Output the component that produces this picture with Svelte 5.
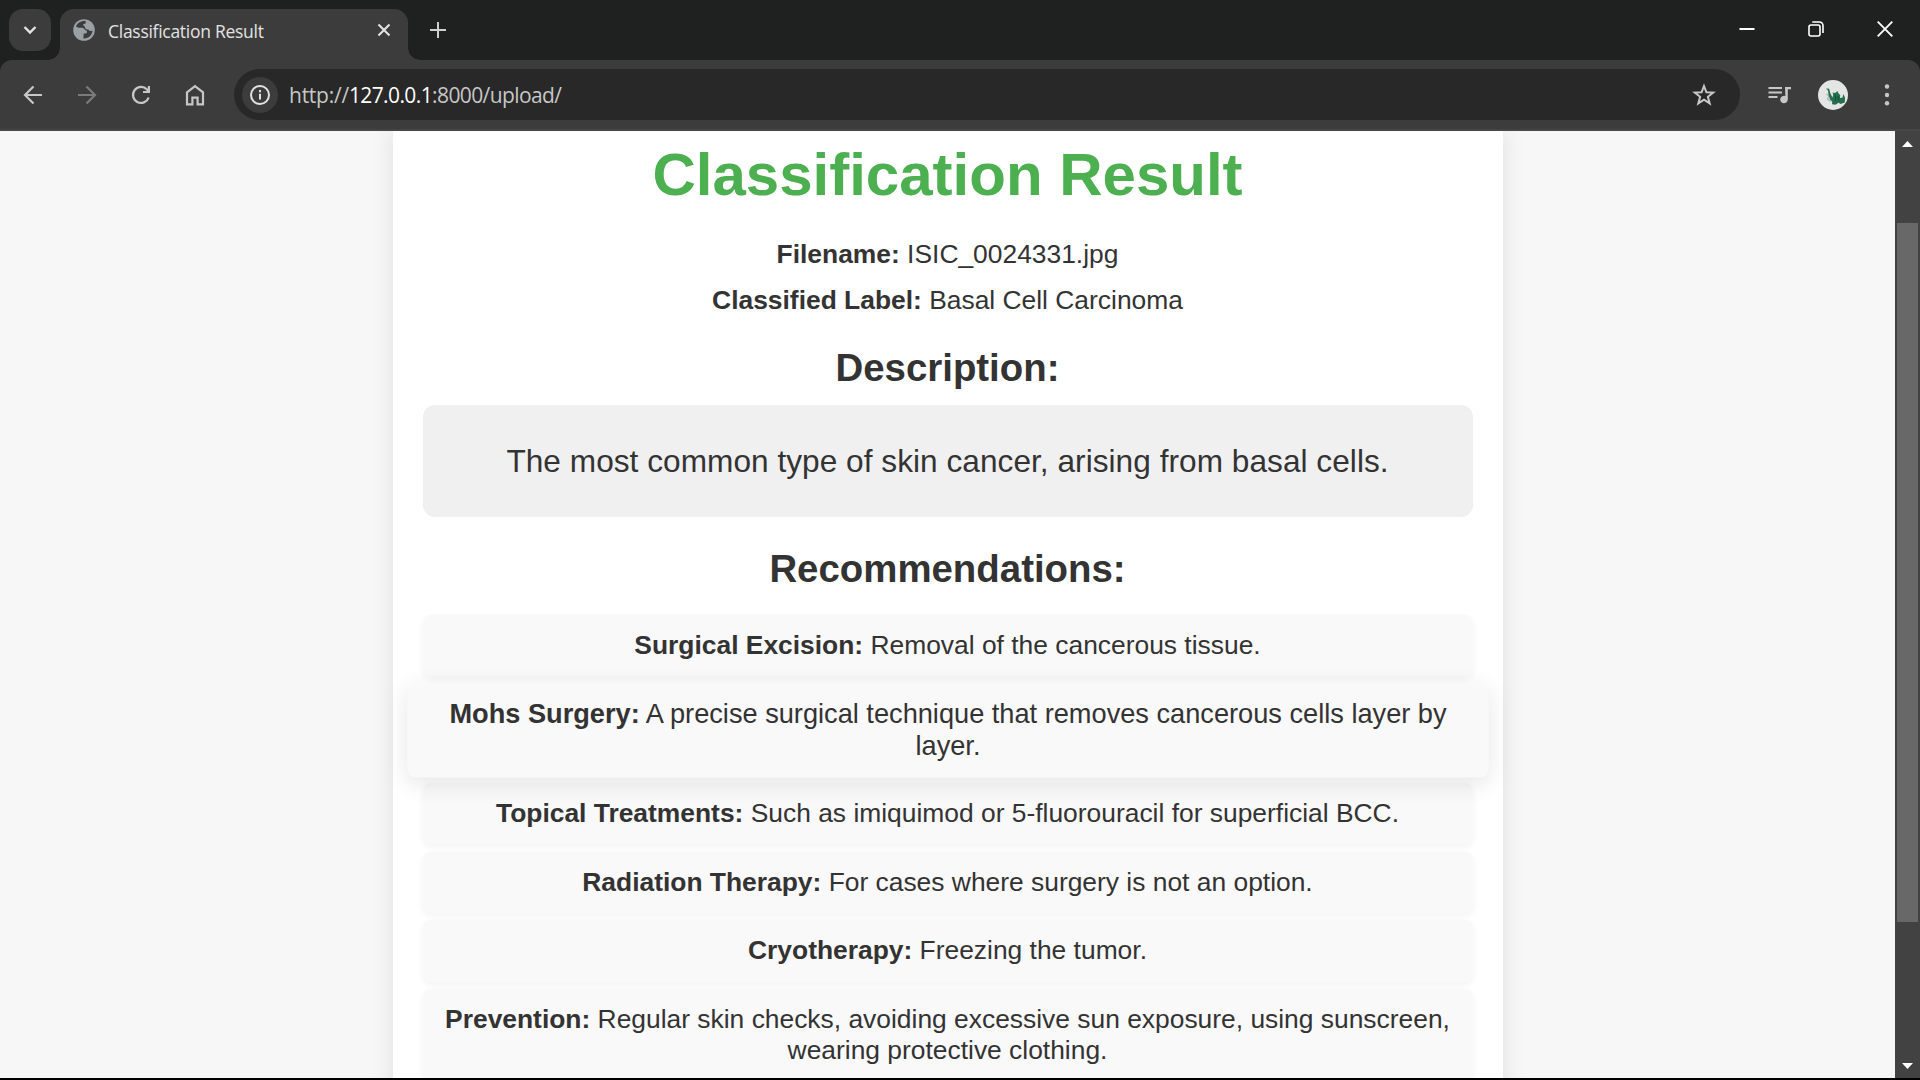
<script>
  const recommendations = [
    { name: 'Surgical Excision:', text: 'Removal of the cancerous tissue.' },
    { name: 'Mohs Surgery:', text: 'A precise surgical technique that removes cancerous cells layer by layer.', raised: true },
    { name: 'Topical Treatments:', text: 'Such as imiquimod or 5-fluorouracil for superficial BCC.' },
    { name: 'Radiation Therapy:', text: 'For cases where surgery is not an option.' },
    { name: 'Cryotherapy:', text: 'Freezing the tumor.' },
    { name: 'Prevention:', text: 'Regular skin checks, avoiding excessive sun exposure, using sunscreen, wearing protective clothing.' }
  ];
</script>

<div class="window">
  <header class="tabstrip">
    <button class="tab-search" aria-label="Search tabs">
      <svg width="16" height="16" viewBox="0 0 16 16"><path d="M2.5 5 L8 10.5 L13.5 5" fill="none" stroke="#e3e3e3" stroke-width="2.4" /></svg>
    </button>
    <div class="tab">
      <svg class="globe" width="22" height="22" viewBox="0 0 22 22">
        <circle cx="11" cy="11" r="10.8" fill="#9aa0a6" />
        <path d="M12.8 2.2 C8 1.6 4.5 4 3 7.6 C4.5 8.8 6 9 9 8.8 C10.5 9 11.5 10 12.2 11 C14 11.5 14.5 13 13.6 14.2 L10.6 14.6 L10.4 19.6 C13.5 19.8 16.6 18.2 18.4 15.2 C19 14 19.5 12.8 19.6 11.4 C18 12.6 16.2 12.2 15.4 10.6 C13.2 10.6 11.6 9.4 11.8 7.4 C9.6 7 9.6 4.8 12.6 4.6 Z" fill="#3c3c3c" />
        <path d="M3 8.2 C7 9.4 11 9.4 12.6 12.4 C12.6 14 10.8 14.2 10.2 14.8 L9.8 19.6 L5 18 Z" fill="#9aa0a6" />
      </svg>
      <span class="tab-title">Classification Result</span>
      <svg class="tab-close" width="14" height="14" viewBox="0 0 14 14"><path d="M1.5 1.5 L12.5 12.5 M12.5 1.5 L1.5 12.5" stroke="#e3e3e3" stroke-width="2.1" /></svg>
    </div>
    <svg class="newtab" width="16" height="16" viewBox="0 0 16 16"><path d="M8 0 V16 M0 8 H16" stroke="#cfcfcf" stroke-width="2" /></svg>
    <div class="controls">
      <svg width="16" height="16" viewBox="0 0 16 16"><path d="M0.5 8 H15.5" stroke="#fff" stroke-width="2" /></svg>
      <svg width="16" height="16" viewBox="0 0 16 16" fill="none" stroke="#fff" stroke-width="1.6"><rect x="1" y="4" width="11" height="11" rx="2" /><path d="M4.3 1 H11.5 A3.5 3.5 0 0 1 15 4.5 V12" /></svg>
      <svg width="16" height="16" viewBox="0 0 16 16"><path d="M0.7 0.7 L15.3 15.3 M15.3 0.7 L0.7 15.3" stroke="#fff" stroke-width="1.8" /></svg>
    </div>
  </header>

  <nav class="toolbar">
    <svg class="nav-icon" width="24" height="24" viewBox="0 0 24 24"><path d="M21 12 H4.5 M12.5 3.5 L4 12 L12.5 20.5" fill="none" stroke="#c7c7c7" stroke-width="2.2" /></svg>
    <svg class="nav-icon" width="24" height="24" viewBox="0 0 24 24"><path d="M3 12 H19.5 M11.5 3.5 L20 12 L11.5 20.5" fill="none" stroke="#7b7b7b" stroke-width="2.2" /></svg>
    <svg class="nav-icon" width="24" height="24" viewBox="0 0 24 24"><path d="M19.6 14.5 A8 8 0 1 1 18 6.6 L20 8.8" fill="none" stroke="#c7c7c7" stroke-width="2.2" /><path d="M21 3 V10 H14 V7.9 H18.8 V3 Z" fill="#c7c7c7" /></svg>
    <svg class="nav-icon" width="24" height="24" viewBox="0 0 24 24"><path d="M4 9.3 L12 3.2 L20 9.3 V21.4 H14.6 V14.6 H9.4 V21.4 H4 Z" fill="none" stroke="#c7c7c7" stroke-width="2.2" /></svg>
    <div class="omnibox">
      <span class="site-info">
        <svg width="22" height="22" viewBox="0 0 22 22"><circle cx="11" cy="11" r="9" fill="none" stroke="#e3e3e3" stroke-width="2" /><path d="M11 9.8 V15.6 M11 6 V8.2" stroke="#e3e3e3" stroke-width="2" /></svg>
      </span>
      <span class="url"><span class="scheme">http://</span><b>127.0.0.1</b>:8000/upload/</span>
      <svg class="star" width="24" height="24" viewBox="0 0 24 24"><path d="M12 3 L14.4 9.3 L21.2 9.6 L15.9 13.8 L17.7 20.4 L12 16.6 L6.3 20.4 L8.1 13.8 L2.8 9.6 L9.6 9.3 Z" fill="none" stroke="#c7c7c7" stroke-width="2" /></svg>
    </div>
    <svg class="media" width="24" height="18" viewBox="0 0 24 18"><path d="M0.5 2 H14 M0.5 6.5 H14 M0.5 11 H9.5" stroke="#c7c7c7" stroke-width="2" /><path d="M17 1 H23 V3.2 H19.8 V13.5 A3.8 3.8 0 1 1 17.4 10 Z" fill="#c7c7c7" /></svg>
    <svg class="avatar" width="30" height="30" viewBox="0 0 30 30">
      <circle cx="15" cy="15" r="15" fill="#e4e6e5" />
      <path d="M8.5 14 L11 16 L9.5 19 L13 21.5" fill="none" stroke="#aab5ae" stroke-width="1.3" />
      <path d="M8 8.5 L11.2 8.8 L12.2 13 L14.4 17.5 L15.2 15 L14.6 12.5 L17.2 13 L19.4 11 L20.6 13.5 L22.2 15 L22 18 L24.6 17.5 L25.2 14 L27 17.5 L26.8 22.5 L22.5 24 L20.5 22.8 L17.5 24.8 L14 24.2 L14.2 21.5 L12 19.5 L10.4 14 L10 10.6 Z" fill="#23704f" />
      <path d="M17 15 L18 21 M20 16 L21 21" stroke="#174a37" stroke-width="1" />
    </svg>
    <svg class="menu" width="6" height="24" viewBox="0 0 6 24" fill="#c7c7c7"><circle cx="3" cy="3.5" r="2.2" /><circle cx="3" cy="12" r="2.2" /><circle cx="3" cy="20.3" r="2.2" /></svg>
  </nav>

  <div class="viewport">
    <div class="page">
      <main class="card">
        <h1>Classification Result</h1>
        <p><strong>Filename:</strong> ISIC_0024331.jpg</p>
        <p><strong>Classified Label:</strong> Basal Cell Carcinoma</p>
        <h2>Description:</h2>
        <div class="description">The most common type of skin cancer, arising from basal cells.</div>
        <h2>Recommendations:</h2>
        <ul>
          {#each recommendations as item}
            <li class:raised={item.raised}><strong>{item.name}</strong> {item.text}</li>
          {/each}
        </ul>
      </main>
    </div>
    <div class="scrollbar">
      <svg width="11" height="6" viewBox="0 0 11 6"><path d="M0 6 L5.5 0 L11 6 Z" fill="#fff" /></svg>
      <div class="thumb"></div>
      <svg width="11" height="6" viewBox="0 0 11 6"><path d="M0 0 H11 L5.5 6 Z" fill="#fff" /></svg>
    </div>
  </div>
</div>

<style>
  :global(body) { margin: 0; background: #000; overflow: hidden; }
  .window { width: 1920px; height: 1078px; display: flex; flex-direction: column; background: #1f2120; overflow: hidden; }
  button { border: 0; padding: 0; }
  svg { display: block; flex: none; }

  .tabstrip { height: 60px; flex: none; display: flex; align-items: flex-start; background: #1f2120; box-sizing: border-box; padding: 9px 12px 0 9px; font-family: "Open Sans", sans-serif; }
  .tab-search { width: 42px; height: 42px; border-radius: 14px; background: #3c3c3c; display: flex; align-items: center; justify-content: center; margin-right: 9px; }
  .tab { position: relative; width: 348px; height: 51px; background: #3c3c3c; border-radius: 14px 14px 0 0; display: flex; align-items: flex-start; box-sizing: border-box; padding: 0 17px 0 13px; }
  .tab::before, .tab::after { content: ""; position: absolute; bottom: 0; width: 12px; height: 12px; }
  .tab::before { left: -12px; background: radial-gradient(circle at 0 0, transparent 11.5px, #3c3c3c 12px); }
  .tab::after { right: -12px; background: radial-gradient(circle at 100% 0, transparent 11.5px, #3c3c3c 12px); }
  .globe { margin-top: 10px; }
  .tab-title { margin: 10px 0 0 13px; flex: 1; font-size: 17.5px; line-height: 24px; letter-spacing: -0.28px; color: #e3e3e3; white-space: nowrap; }
  .tab-close { margin-top: 14px; }
  .newtab { margin: 13px 0 0 22px; }
  .controls { margin: 12px 15px 0 auto; display: flex; gap: 53px; }

  .toolbar { height: 71px; flex: none; display: flex; align-items: center; background: #3c3c3c; border-radius: 12px 12px 0 0; box-sizing: border-box; padding: 0 30px 0 21px; border-bottom: 2px solid #474747; }
  .nav-icon { margin-right: 30px; }
  .omnibox { width: 1506px; flex: none; height: 51px; border-radius: 26px; background: #282828; display: flex; align-items: center; box-sizing: border-box; padding: 0 24px 0 8px; margin-left: -3px; }
  .site-info { width: 36px; height: 36px; border-radius: 50%; background: #3c3c3c; display: flex; align-items: center; justify-content: center; }
  .url { margin-left: 11px; flex: 1; font-family: "Open Sans", sans-serif; font-size: 21px; line-height: 30px; letter-spacing: -0.6px; color: #c7c7c7; white-space: nowrap; }
  .url .scheme { letter-spacing: -0.25px; }
  .url b { font-weight: 400; color: #fff; }
  .media { margin-left: 28px; }
  .avatar { margin-left: 26px; }
  .menu { margin-left: 36px; }

  .viewport { flex: 1; min-height: 0; display: flex; background: #f7f7f7; }
  .page { flex: 1; min-width: 0; display: flex; justify-content: center; overflow: hidden; }
  .card { width: 1110px; height: 1100px; flex: none; box-sizing: border-box; padding: 9px 30px 0; background: #fff; box-shadow: 0 0 22px rgba(0, 0, 0, 0.1); font-family: "Liberation Sans", Arial, sans-serif; color: #333; text-align: center; }
  h1 { margin: 0 0 30px; font-size: 60px; line-height: 69px; color: #4caf50; }
  p { margin: 0 0 15px; font-size: 26.4px; line-height: 31px; }
  h2 { margin: 30px 0 15px; font-size: 38.4px; line-height: 44px; }
  .description { height: 112px; border-radius: 12px; background: #f0f0f0; display: flex; align-items: center; justify-content: center; box-sizing: border-box; font-size: 31.6px; line-height: 36px; letter-spacing: 0.04px; }
  ul { list-style: none; margin: 24px 0 0; padding: 0; }
  li { margin-bottom: 7.5px; padding: 15px; border-radius: 8px; background: #f9f9f9; box-shadow: 0 3px 7.5px rgba(0, 0, 0, 0.05); font-size: 26.4px; line-height: 31.1px; }
  li.raised { position: relative; transform: scale(1.03); box-shadow: 0 6px 22px rgba(0, 0, 0, 0.1); }

  .scrollbar { width: 25px; background: #424242; display: flex; flex-direction: column; align-items: center; justify-content: space-between; box-sizing: border-box; padding: 10px 0 9px; }
  .thumb { width: 21px; height: 699px; background: #686868; margin-bottom: 65px; }
</style>
